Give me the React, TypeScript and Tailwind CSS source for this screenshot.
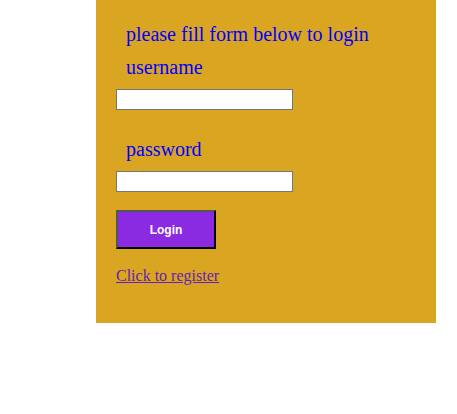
export default function App() {
  return (
    <div className="w-[457px] h-[414px] bg-white">
      <div className="ml-[96px] w-[340px] h-[323px] bg-[#DAA520] pt-[23px] flex flex-col items-start" style={{ fontFamily: '"Liberation Serif", "Times New Roman", serif' }}>
        <div className="ml-[30px] text-[20px] leading-[23px] text-[#0000FF]">please fill form below to login</div>
        <div className="ml-[30px] mt-[10px] text-[20px] leading-[23px] text-[#0000FF]">username</div>
        <input type="text" className="ml-[20px] mt-[10px] w-[177px] h-[21px] bg-white border border-[#767676] outline-none" />
        <div className="ml-[30px] mt-[28px] text-[20px] leading-[23px] text-[#0000FF]">password</div>
        <input type="password" className="ml-[20px] mt-[10px] w-[177px] h-[21px] bg-white border border-[#767676] outline-none" />
        <button
          className="ml-[20px] mt-[18px] w-[100px] h-[39px] bg-[#8A2BE2] text-white font-bold text-[12px] border-2 border-t-[#555555] border-l-[#555555] border-b-black border-r-black"
          style={{ fontFamily: '"Liberation Sans", Arial, sans-serif' }}
        >
          Login
        </button>
        <a href="#" className="ml-[20px] mt-[18px] text-[16px] leading-[18px] text-[#6522b0] underline">Click to register</a>
      </div>
    </div>
  );
}
